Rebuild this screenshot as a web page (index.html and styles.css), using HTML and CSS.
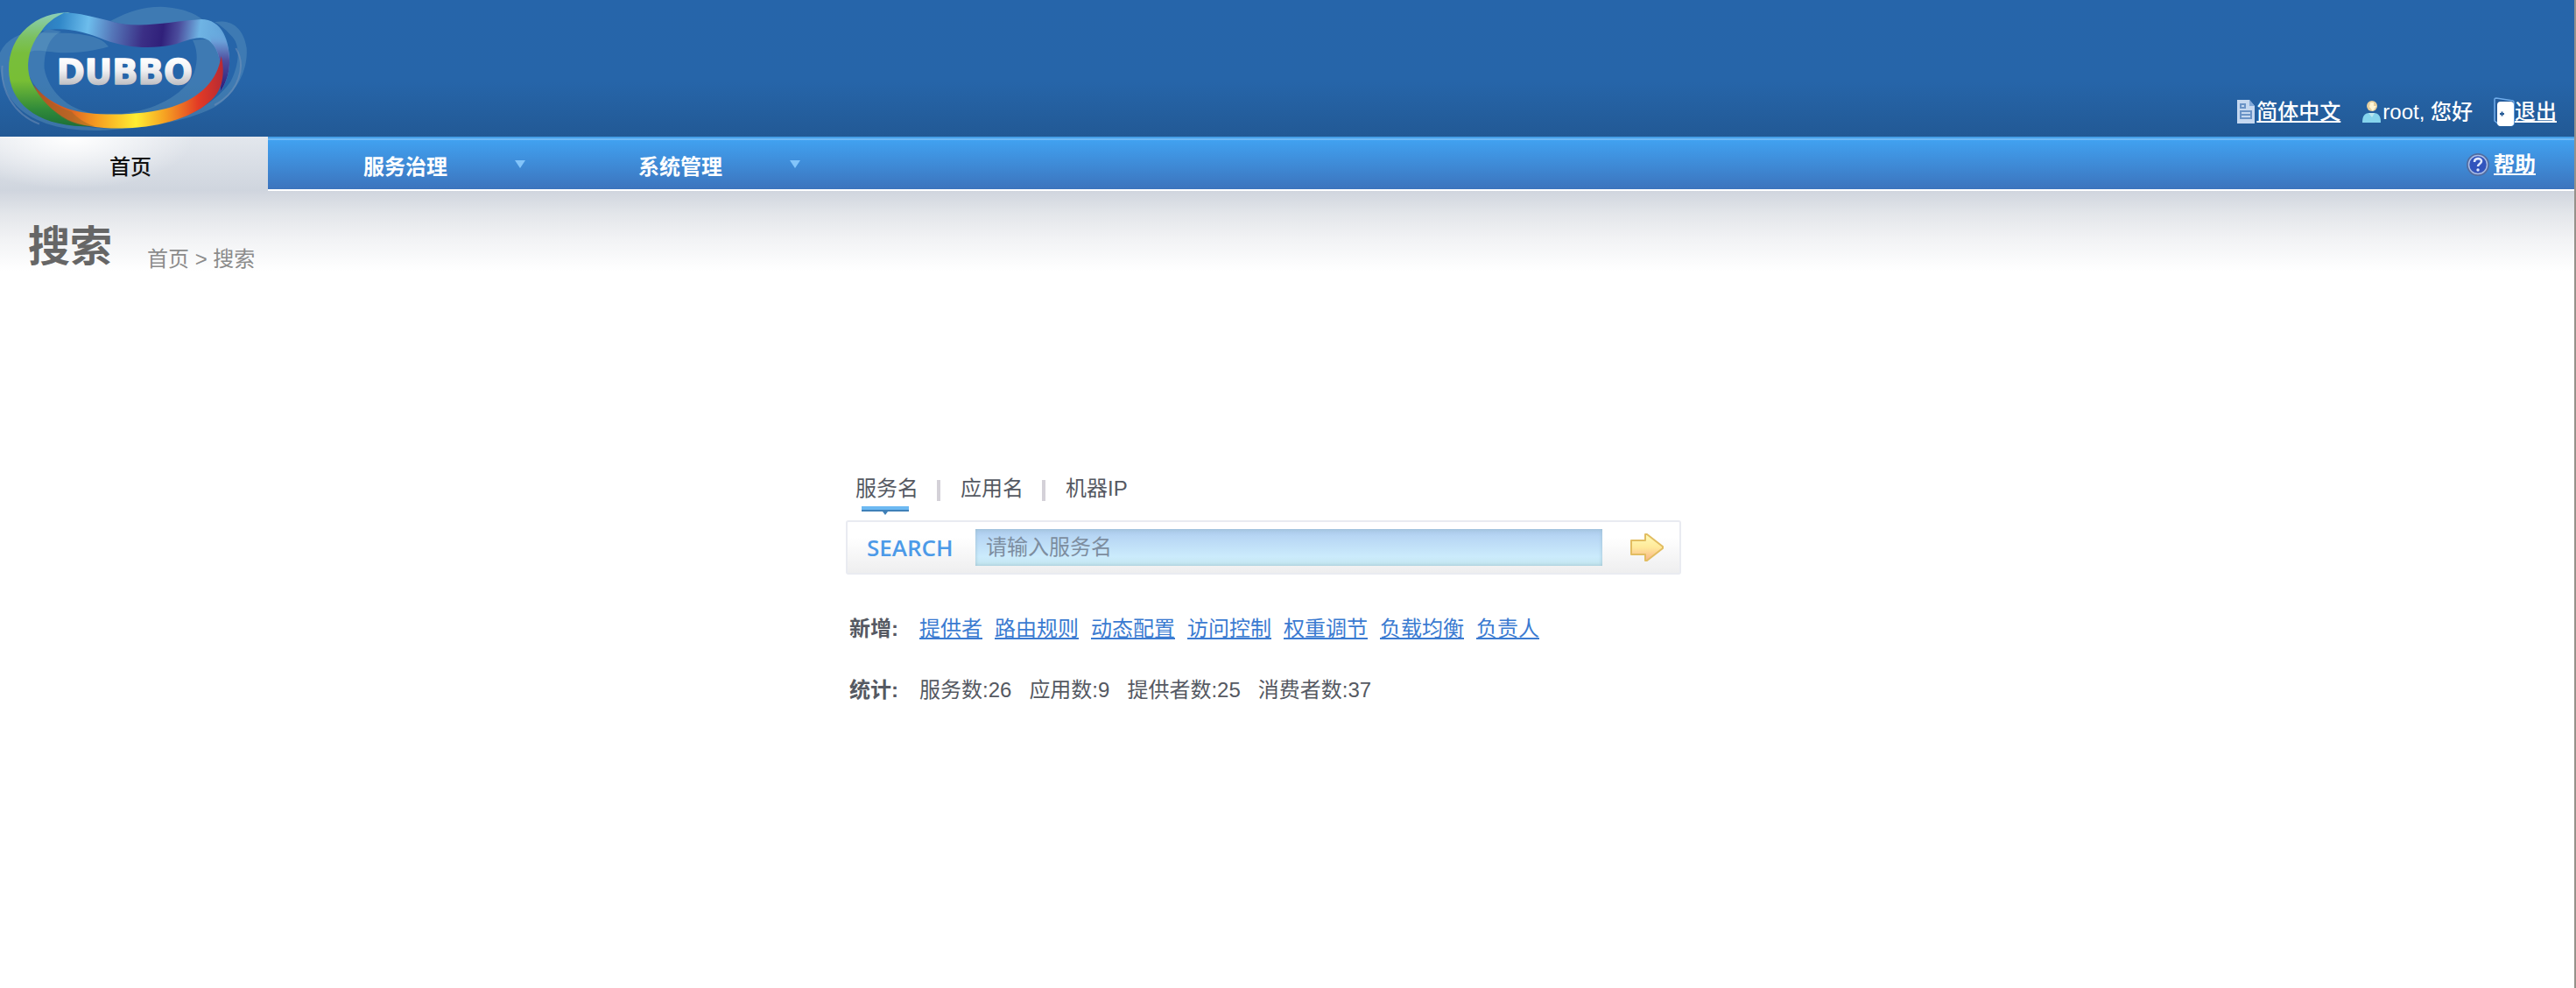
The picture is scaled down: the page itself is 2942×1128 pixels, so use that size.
FILE: index.html
```html
<!DOCTYPE html>
<html lang="zh-CN">
<head>
<meta charset="utf-8">
<meta name="viewport" content="width=device-width, initial-scale=1">
<title>Dubbo</title>
<link rel="stylesheet" href="styles.css">
</head>
<body>
<header class="header">
  <svg class="logo" viewBox="0 0 960 468" role="img" aria-label="DUBBO">
    <defs>
      <linearGradient id="green" x1="0" y1="42" x2="0" y2="432" gradientUnits="userSpaceOnUse">
        <stop offset="0" stop-color="#8ccfbb"/><stop offset=".22" stop-color="#7cc160"/><stop offset=".36" stop-color="#78be3c"/><stop offset=".6" stop-color="#78be35"/><stop offset=".85" stop-color="#318b3a"/><stop offset="1" stop-color="#1c7038"/>
      </linearGradient>
      <linearGradient id="wave" x1="140" y1="60" x2="790" y2="150" gradientUnits="userSpaceOnUse">
        <stop offset="0" stop-color="#2c78bb"/><stop offset=".1" stop-color="#3087c8"/><stop offset=".25" stop-color="#6dbdec"/><stop offset=".38" stop-color="#5577b9"/><stop offset=".54" stop-color="#3b2f86"/><stop offset=".64" stop-color="#30207a"/><stop offset=".72" stop-color="#4b4c9c"/><stop offset=".83" stop-color="#6fb4e4"/><stop offset="1" stop-color="#5e9cd5"/>
      </linearGradient>
      <linearGradient id="tail" x1="0" y1="100" x2="0" y2="315" gradientUnits="userSpaceOnUse">
        <stop offset="0" stop-color="#6cb5e6" stop-opacity="0"/><stop offset=".2" stop-color="#6a9fd8"/><stop offset=".5" stop-color="#4f4c9c"/><stop offset="1" stop-color="#291c78"/>
      </linearGradient>
      <linearGradient id="warm" x1="115" y1="0" x2="765" y2="0" gradientUnits="userSpaceOnUse">
        <stop offset="0" stop-color="#c94324"/><stop offset=".2" stop-color="#dc6524"/><stop offset=".33" stop-color="#f69c20"/><stop offset=".54" stop-color="#ffee32"/><stop offset=".7" stop-color="#f59d22"/><stop offset=".87" stop-color="#e23a25"/><stop offset="1" stop-color="#b72a34"/>
      </linearGradient>
      <linearGradient id="metal" x1="0" y1="200" x2="0" y2="292" gradientUnits="userSpaceOnUse">
        <stop offset="0" stop-color="#fff"/><stop offset=".45" stop-color="#f0f0f2"/><stop offset="1" stop-color="#bdbdc1"/>
      </linearGradient>
    </defs>
    <g fill="#7db3cd" fill-opacity=".28">
      <path d="M378 72C440 38 492 23 550 23C628 26 675 49 700 72L640 75C570 80 480 105 378 72Z"/>
      <path d="M0 180C24 132 70 111 120 112L230 113C300 118 350 127 372 160C310 178 245 184 190 179C140 174 120 169 100 178L96 260C110 330 190 400 285 432C350 445 490 440 570 420C650 400 740 350 790 280C822 215 825 150 790 120C770 98 750 82 735 76C790 64 835 95 845 165C850 235 815 320 730 370C630 420 480 440 400 443C240 460 110 425 50 355C10 310-5 245 0 180Z"/>
      <path fill-rule="evenodd" d="M100 178C110 145 135 110 165 100L210 108C170 125 150 175 152 235C165 310 230 375 320 389L420 389C520 380 630 330 665 250C680 205 675 165 660 137L735 132C765 160 768 230 740 280C690 345 560 400 400 414C240 410 130 340 96 250Z"/>
    </g>
    <path d="M8 225C0 305 45 390 135 425M808 165C845 225 820 315 735 360" fill="none" stroke="#7894ba" stroke-width="6" opacity=".5"/>
    <path fill="url(#green)" d="M240 42C125 42 30 118 30 238C32 350 120 428 285 433L318 433C210 400 135 340 110 285C70 205 120 80 240 42Z"/>
    <path fill="url(#wave)" d="M185 44C260 38 320 60 375 71C470 103 590 72 690 66C740 66 782 105 786 200C788 245 775 285 754 315C762 260 760 180 724 146C690 111 640 142 590 154C510 170 430 162 360 137C285 107 220 90 143 106C160 80 185 60 222 43Z"/>
    <path fill="url(#tail)" d="M717 85C760 95 785 145 786 205C788 245 775 285 754 315C762 260 760 180 724 146Z"/>
    <path fill="url(#warm)" d="M115 291C150 335 210 377 300 387C390 397 510 391 590 366C690 333 745 275 758 192C772 250 763 307 725 342C670 397 560 435 430 439C360 442 275 432 232 410C180 381 140 344 115 291Z"/>
    <path fill="#8e6828" opacity=".45" d="M115 291C150 335 200 371 245 382C262 402 290 422 325 433C260 432 225 412 195 389C160 360 135 332 115 291Z"/>
    <text class="logo-text" x="194" y="288">DUBBO</text>
  </svg>
  <div class="account">
    <a class="account-item" href="#">
      <svg class="icon" viewBox="0 0 24 32" aria-hidden="true"><path fill="#c5d8f0" d="M2 2h14l6 7v20H2z"/><path fill="#80a8d8" d="M16 2l6 7h-6z"/><path fill="none" stroke="#6a93c6" stroke-width="2" d="M6 7h5v4H6zM6 15h12v8H6zM6 19h12"/></svg><span class="underlined">简体中文</span></a>
    <span class="account-item">
      <svg class="icon" viewBox="0 0 24 32" aria-hidden="true"><path fill="#86d4ed" d="M1 28c0-7 2-11 8-11h5c6 0 8 4 8 11z"/><path fill="#b9e6ef" d="M8 17h7l-3 5z"/><circle cx="12" cy="9" r="6" fill="#e6cfa0"/><path fill="#fff5d4" d="M10 5h4v4h3l-4 6-4-5z"/></svg><span>root, 您好</span></span>
    <a class="account-item" href="#">
      <svg class="icon" viewBox="0 0 24 34" aria-hidden="true"><path fill="#245b9b" stroke="#71adeb" stroke-width="1.5" d="M1 2q0-1 2-1l19 3q1 0 1 2v23q0 3-3 3H7L1 27z"/><rect x="4" y="5" width="19" height="28" rx="4" fill="#fff"/><path d="M7 19h5M9.500 16.500v5" stroke="#285d98" stroke-width="2"/></svg><span class="underlined">退出</span></a>
  </div>
</header>
<nav class="nav">
  <a class="nav-item nav-home" href="#">首页</a>
  <a class="nav-item" href="#"><span class="nav-label">服务治理</span><span class="nav-arrow"></span></a>
  <a class="nav-item" href="#"><span class="nav-label">系统管理</span><span class="nav-arrow"></span></a>
  <a class="help" href="#">
    <svg class="help-icon" viewBox="0 0 26 26" aria-hidden="true"><circle cx="13" cy="13" r="12" fill="#3154bd" stroke="#526c9f" stroke-width="2"/><circle cx="13" cy="13" r="10.5" fill="none" stroke="#a9bde4" stroke-width="1.5"/><path d="M9 10c0-5 8-5 8-1 0 3-4 3-4 6" fill="none" stroke="#dfe9ff" stroke-width="2.6"/><circle cx="13" cy="19" r="1.7" fill="#dfe9ff"/></svg><span class="underlined">帮助</span></a>
</nav>
<main class="page">
  <div class="heading">
    <h1 class="title">搜索</h1>
    <div class="crumbs">首页 &gt; 搜索</div>
  </div>
  <section class="search">
    <div class="tabs">
      <button class="tab tab-active" type="button">服务名</button>
      <button class="tab" type="button">应用名</button>
      <button class="tab" type="button">机器IP</button>
    </div>
    <form class="search-box">
      <label class="search-label" for="keyword">SEARCH</label>
      <input class="search-input" id="keyword" type="text" placeholder="请输入服务名">
      <button class="search-go" type="submit" aria-label="搜索">
        <svg class="go-icon" viewBox="0 0 40 32" aria-hidden="true"><defs><linearGradient id="gold" x1="0" y1="0" x2="0" y2="1"><stop offset="0" stop-color="#fffbb8"/><stop offset=".5" stop-color="#ffe99a"/><stop offset="1" stop-color="#f9b488"/></linearGradient></defs><path fill="url(#gold)" stroke="#e2bd61" stroke-width="2" stroke-linejoin="round" d="M2 8h16V1h2l18 14v2L20 31h-2v-7H2z"/></svg>
      </button>
    </form>
    <div class="row row-links">
      <strong class="row-label">新增:</strong>
      <a href="#">提供者</a><a href="#">路由规则</a><a href="#">动态配置</a><a href="#">访问控制</a><a href="#">权重调节</a><a href="#">负载均衡</a><a href="#">负责人</a>
    </div>
    <div class="row row-stats">
      <strong class="row-label">统计:</strong>
      <span>服务数:26</span><span>应用数:9</span><span>提供者数:25</span><span>消费者数:37</span>
    </div>
  </section>
</main>
</body>
</html>
```
FILE: styles.css
```css
* {
  box-sizing: border-box;
}

body {
  margin: 0;
  min-height: 100vh;
  border-right: 2px solid #96918a;
  background: #fff;
  color: #555962;
  font: 24px/36px "Liberation Sans", "Noto Sans CJK SC", sans-serif;
}

a {
  color: inherit;
}

button,
input {
  margin: 0;
  border: 0;
  padding: 0;
  background: none;
  color: inherit;
  font: inherit;
}

.header {
  display: flex;
  align-items: flex-end;
  justify-content: space-between;
  height: 156px;
  background: linear-gradient(#2665aa, #2665a9 60%, #225995);
}

.logo {
  width: 320px;
  height: 156px;
}

.logo-text {
  fill: url(#metal);
  stroke: url(#metal);
  stroke-width: 4px;
  stroke-linejoin: round;
  font: bold 116px "DejaVu Sans", sans-serif;
}

.account {
  display: flex;
  gap: 24px;
  padding: 0 20px 10px 0;
  color: #fff;
  font-weight: 500;
}

.account-item {
  display: flex;
  align-items: center;
  text-decoration: none;
}

.icon {
  width: 24px;
  height: 34px;
}

.underlined {
  text-decoration: underline;
  text-decoration-thickness: 2px;
  text-underline-offset: 2px;
}

.nav {
  display: flex;
  height: 62px;
  border-bottom: 2px solid #fff;
  background: linear-gradient(#469fe8 2px, #70b9f5 2px 4px, #41a1f0 4px, #3c74bd);
  color: #fff;
  font-weight: bold;
}

.nav-item {
  display: grid;
  grid-template-columns: 1fr auto 1fr;
  align-items: center;
  width: 314px;
  padding-top: 10px;
  text-decoration: none;
}

.nav-home {
  display: block;
  width: 306px;
  height: 62px;
  padding: 17px 8px 0 0;
  background:
    radial-gradient(ellipse 140px 60px at 82px 0, #fff, transparent),
    linear-gradient(#e3e7ed, #cfd5de);
  color: #111;
  font-weight: 500;
  text-align: center;
}

.nav-label {
  grid-column: 2;
}

.nav-arrow {
  justify-self: end;
  margin: 0 20px 8px 0;
  border: 6px solid transparent;
  border-top: 9px solid #83c4fa;
  border-bottom: 0;
}

.help {
  display: flex;
  align-items: center;
  gap: 5px;
  margin-left: auto;
  padding: 4px 44px 0 0;
  text-decoration: none;
}

.help-icon {
  width: 26px;
  height: 26px;
}

.page {
  padding-bottom: 60px;
  background: linear-gradient(#d0d5de, #e3e6ea 26px, #f2f3f5 56px, #fff 92px);
}

.heading {
  display: flex;
  gap: 40px;
  padding: 28px 32px 0;
}

.title {
  margin: 0;
  color: #666;
  font-size: 48px;
  line-height: 72px;
}

.crumbs {
  padding-top: 32px;
  color: #8b8b8b;
}

.search {
  width: 1008px;
  max-width: 100%;
  margin: 222px auto 0;
  padding-right: 54px;
}

.tabs {
  display: flex;
  padding-left: 11px;
}

.tab {
  position: relative;
  height: 54px;
  padding-bottom: 18px;
}

.tab + .tab {
  margin-left: 48px;
}

.tab + .tab::before {
  position: absolute;
  top: 8px;
  left: -27px;
  width: 4px;
  height: 24px;
  background: #d4d1d8;
  content: "";
}

.tab-active::before {
  position: absolute;
  top: 38px;
  left: 7px;
  width: 54px;
  height: 6px;
  background: linear-gradient(#6db9f2 4px, #3f80b8 4px);
  content: "";
}

.tab-active::after {
  position: absolute;
  top: 44px;
  left: 31px;
  border: 3px solid transparent;
  border-top: 4px solid #3f80b8;
  border-bottom: 0;
  content: "";
}

.search-box {
  display: flex;
  align-items: center;
  height: 62px;
  border: 2px solid #e9ebf1;
  border-radius: 3px;
  background: linear-gradient(#fff 30%, #eeeeef);
}

.search-label {
  width: 146px;
  padding-left: 22px;
  color: #4c9ae8;
  font: 600 26px/36px "Open Sans", sans-serif;
}

.search-input {
  flex: 1;
  min-width: 0;
  height: 42px;
  padding: 0 12px;
  background: linear-gradient(#a9c8e8, #b7d6f4 20%, #cbebfc 75%, #c4e6ee);
  box-shadow: inset 0 0 4px #9bbfd0;
}

.search-input::placeholder {
  color: #7d8d9f;
  opacity: 1;
}

.search-go {
  display: flex;
  align-items: center;
  justify-content: flex-end;
  width: 88px;
  height: 42px;
  padding-right: 17px;
}

.go-icon {
  width: 40px;
  height: 32px;
}

.row {
  display: flex;
  padding-left: 4px;
}

.row-label {
  width: 80px;
}

.row-links {
  gap: 14px;
  margin-top: 44px;
}

.row-links .row-label {
  margin-right: -14px;
}

.row-links a {
  color: #3b7bd1;
  text-decoration-thickness: 2px;
  text-underline-offset: 2px;
}

.row-stats {
  gap: 20px;
  margin-top: 34px;
}

.row-stats .row-label {
  margin-right: -20px;
}
```
